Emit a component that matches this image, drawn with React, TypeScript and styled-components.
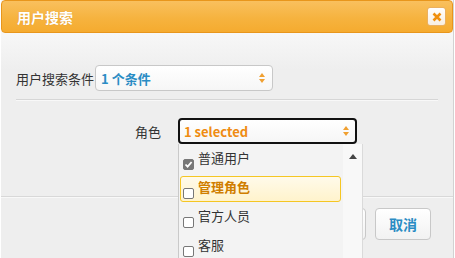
import React from 'react';
import styled, {createGlobalStyle} from "styled-components";

const GlobalStyle = createGlobalStyle`
  html, body {
    margin: 0;
    padding: 0;
    background: #ffffff;
    font-family: "Noto Sans CJK SC", "Liberation Sans", sans-serif;
    overflow: hidden;
  }
`

const roles = [
    {name: '普通用户', checked: true, active: false},
    {name: '管理角色', checked: false, active: true},
    {name: '官方人员', checked: false, active: false},
    {name: '客服', checked: false, active: false},
]

const Arrows = ({color}: { color: string }) => (
    <svg width="6" height="10" viewBox="0 0 6 10">
        <path d="M3 0 L6 4 L0 4 Z" fill={color}/>
        <path d="M0 6 L6 6 L3 10 Z" fill={color}/>
    </svg>
)

export default function App() {
    return (
        <>
            <GlobalStyle/>
            <Dialog>
                <Header>
                    <Title>用户搜索</Title>
                    <CloseButton>
                        <svg width="10" height="10" viewBox="0 0 10 10">
                            <path d="M1.5 1.5 L8.5 8.5 M8.5 1.5 L1.5 8.5" stroke="#f0900f" strokeWidth="2.6"/>
                        </svg>
                    </CloseButton>
                </Header>
                <Body>
                    <Row>
                        <Label>用户搜索条件</Label>
                        <Select width={178}>
                            <SelectText color="#2a8cc4">1 个条件</SelectText>
                            <Arrows color="#f0a030"/>
                        </Select>
                    </Row>
                    <Divider/>
                    <RoleRow>
                        <RoleLabel>角色</RoleLabel>
                        <SelectWrap>
                            <Select width={179} focused>
                                <SelectText color="#ef8c12">1 selected</SelectText>
                                <Arrows color="#f0a030"/>
                            </Select>
                            <Menu>
                                <MenuList>
                                    {roles.map(r => (
                                        <Item key={r.name} active={r.active}>
                                            <Check checked={r.checked}>
                                                {r.checked && (
                                                    <svg width="9" height="9" viewBox="0 0 9 9">
                                                        <path d="M1.5 4.5 L3.6 6.7 L7.6 2" stroke="#fff" strokeWidth="1.8" fill="none"/>
                                                    </svg>
                                                )}
                                            </Check>
                                            <ItemText active={r.active}>{r.name}</ItemText>
                                        </Item>
                                    ))}
                                </MenuList>
                                <ScrollBar>
                                    <svg width="8" height="5" viewBox="0 0 8 5">
                                        <path d="M4 0 L8 5 L0 5 Z" fill="#444"/>
                                    </svg>
                                </ScrollBar>
                            </Menu>
                        </SelectWrap>
                    </RoleRow>
                </Body>
                <Footer>
                    <Button>确定</Button>
                    <Button>取消</Button>
                </Footer>
            </Dialog>
        </>
    )
}

const Dialog = styled.div`
  margin-left: 1px;
  width: 452px;
  height: 258px;
  border-right: 1px solid #d2d2d2;
  background: linear-gradient(#f7f7f7 34px, #eeeeee 70px);
  display: flex;
  flex-direction: column;
  overflow: hidden;
`

const Header = styled.div`
  flex-shrink: 0;
  height: 31px;
  border: 1px solid #e8961c;
  border-radius: 4px;
  background: linear-gradient(#f9c05e, #f6b33f 55%, #f5ab2f);
  display: flex;
  align-items: center;
  justify-content: space-between;
  padding: 0 6px 0 15px;
`

const Title = styled.div`
  color: #ffffff;
  font-size: 14px;
  font-weight: bold;
  text-shadow: 0 0 1px rgba(180, 100, 0, 0.4);
`

const CloseButton = styled.div`
  width: 17px;
  height: 17px;
  border: 1px solid #eab060;
  border-radius: 3px;
  background: linear-gradient(#ffffff, #f8efe2);
  display: flex;
  align-items: center;
  justify-content: center;
`

const Body = styled.div`
  flex-shrink: 0;
  padding: 32px 15px 0 15px;
  height: 131px;
  position: relative;
  z-index: 2;
`

const Row = styled.div`
  display: flex;
  align-items: center;
  gap: 1px;
`

const Label = styled.div`
  font-size: 13px;
  color: #333;
`

const Select = styled.div<{ width: number, focused?: boolean }>`
  box-sizing: border-box;
  width: ${props => props.width}px;
  height: 26px;
  border: ${props => props.focused ? '2px solid #111' : '1px solid #c8c8c8'};
  border-radius: 4px;
  background: linear-gradient(#ffffff, #f6f6f6);
  display: flex;
  align-items: center;
  justify-content: space-between;
  padding: 0 ${props => props.focused ? 6 : 7}px 0 ${props => props.focused ? 4 : 5}px;
`

const SelectText = styled.div`
  font-size: 13px;
  font-weight: bold;
  color: ${props => props.color};
`

const Divider = styled.div`
  height: 1px;
  background: #d6d6d6;
  margin: 8px 0 0 0;
  border-bottom: 1px solid #f8f8f8;
`

const RoleRow = styled.div`
  display: flex;
  align-items: center;
  margin-top: 17px;
`

const RoleLabel = styled.div`
  width: 162px;
  padding-right: 17px;
  box-sizing: border-box;
  text-align: right;
  font-size: 13px;
  color: #333;
`

const SelectWrap = styled.div`
  position: relative;
`

const Menu = styled.div`
  position: absolute;
  left: 0;
  top: 26px;
  width: 185px;
  height: 140px;
  box-sizing: border-box;
  border-left: 1px solid #c9c9c9;
  border-right: 1px solid #dadada;
  background: #f3f3f3;
  display: flex;
  z-index: 5;
`

const MenuList = styled.div`
  flex: 1;
  padding: 3px 2px 0 1px;
  display: flex;
  flex-direction: column;
  gap: 3px;
`

const Item = styled.div<{ active: boolean }>`
  box-sizing: border-box;
  height: 26px;
  border: 1px solid ${props => props.active ? '#f5c623' : 'transparent'};
  border-radius: 3px;
  background: ${props => props.active ? 'linear-gradient(#fffaea, #fff3cc)' : 'transparent'};
  display: flex;
  align-items: flex-start;
  padding-left: 2px;
`

const Check = styled.div<{ checked: boolean }>`
  box-sizing: border-box;
  width: 11px;
  height: 11px;
  margin-top: 11px;
  border: 1px solid #777;
  border-radius: 2px;
  background: ${props => props.checked ? '#777' : '#fff'};
  display: flex;
  align-items: center;
  justify-content: center;
`

const ItemText = styled.div<{ active: boolean }>`
  margin-left: 4px;
  font-size: 13px;
  line-height: 20px;
  color: ${props => props.active ? '#d07e00' : '#333'};
  font-weight: ${props => props.active ? 'bold' : 'normal'};
`

const ScrollBar = styled.div`
  width: 19px;
  background: #f8f8f8;
  display: flex;
  justify-content: center;
  padding-top: 10px;
`

const Footer = styled.div`
  border-top: 1px solid #d8d8d8;
  box-shadow: inset 0 1px 0 #f8f8f8;
  display: flex;
  justify-content: flex-end;
  gap: 9px;
  padding: 11px 22px 0 0;
  flex: 1;
`

const Button = styled.div`
  box-sizing: border-box;
  width: 56px;
  height: 32px;
  border: 1px solid #c8c8c8;
  border-radius: 4px;
  background: linear-gradient(#ffffff, #f2f2f2);
  display: flex;
  align-items: center;
  justify-content: center;
  font-size: 14px;
  font-weight: bold;
  color: #2a8cc4;
`
